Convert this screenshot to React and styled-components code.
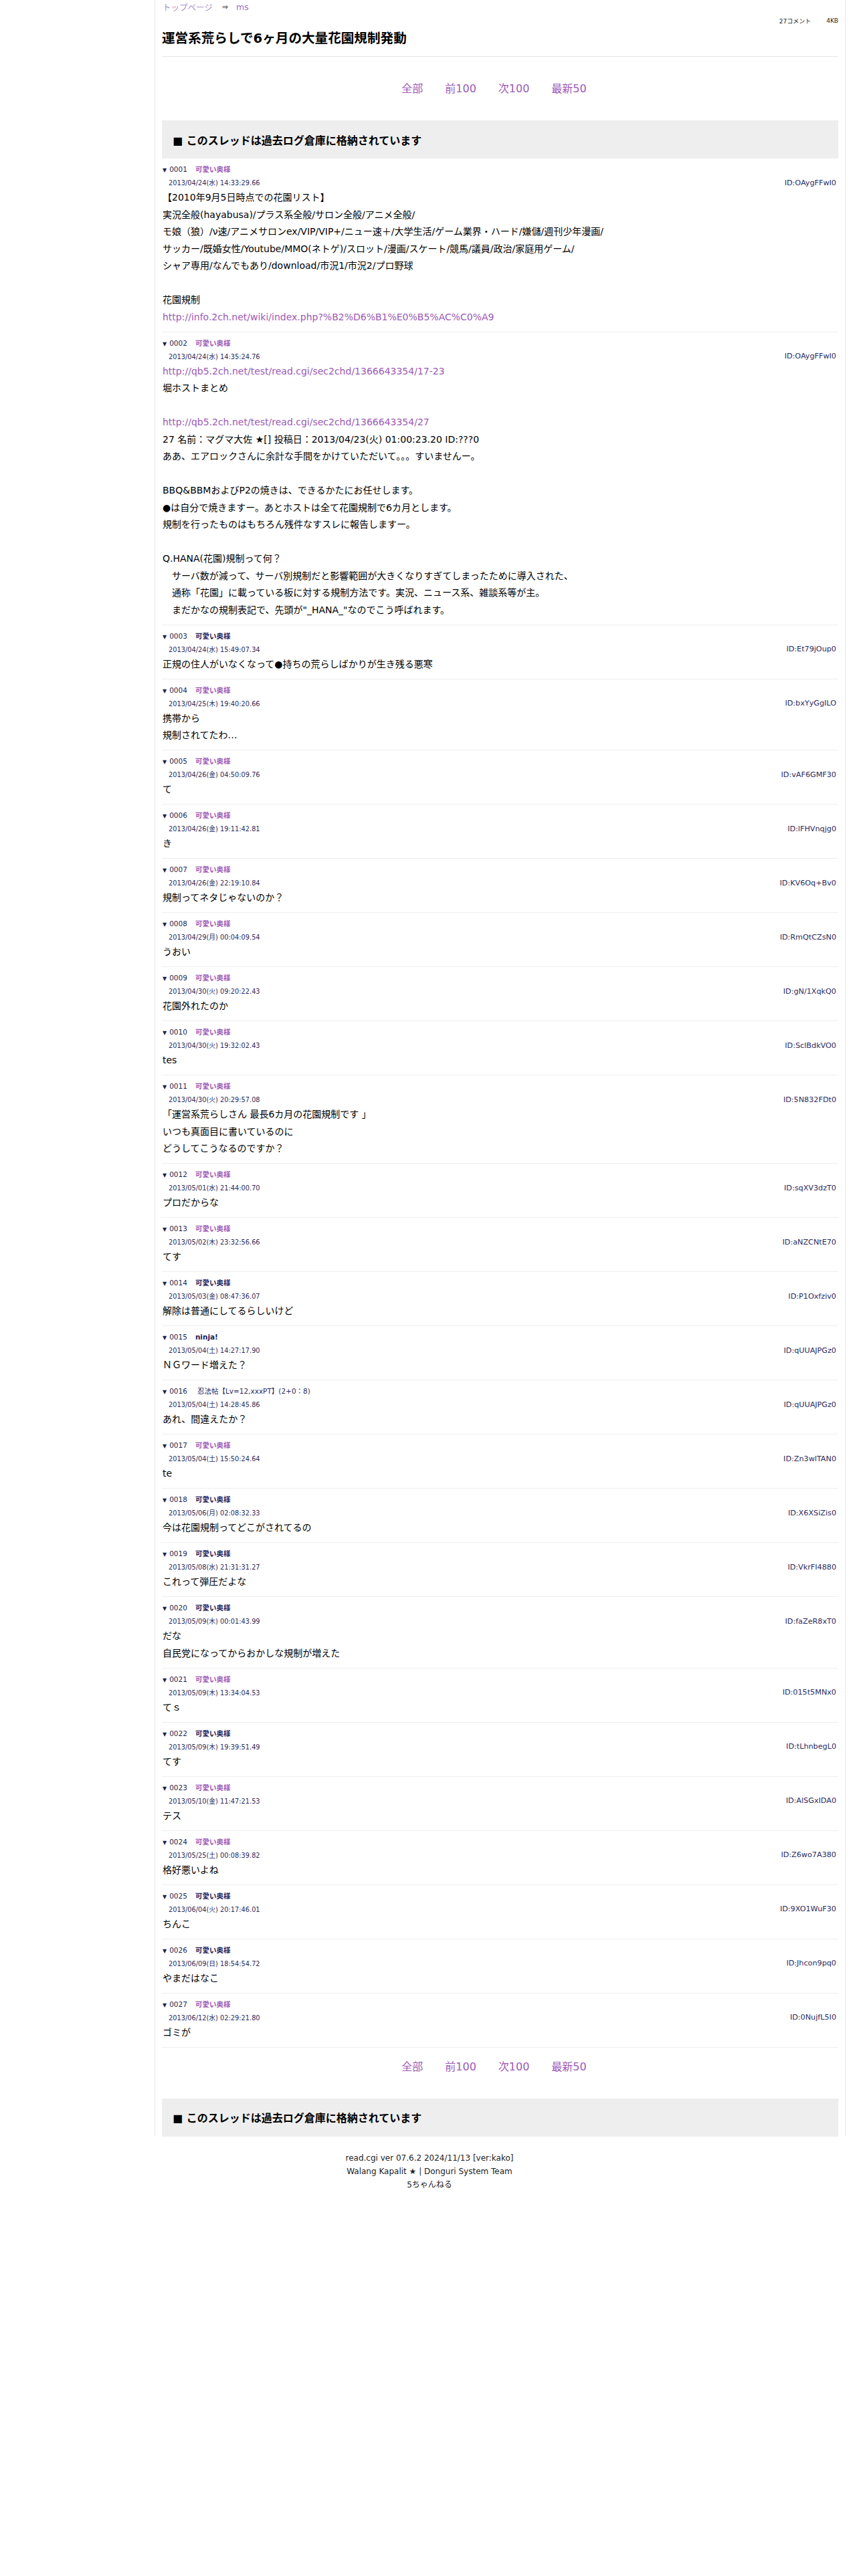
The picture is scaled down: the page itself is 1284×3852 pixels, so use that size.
import React from "react";
import styled, { createGlobalStyle } from "styled-components";

const GlobalStyle = createGlobalStyle`
  body {
    margin: 0;
    background: #fff;
    color: #000;
    font-family: "DejaVu Sans", "Noto Sans CJK JP", sans-serif;
  }
`;

const posts = [
  {
    no: "0001", name: "可愛い奥様", tone: "purple",
    date: "2013/04/24(水) 14:33:29.66", id: "ID:OAygFFwI0",
    body: [
      "【2010年9月5日時点での花園リスト】",
      "実況全般(hayabusa)/プラス系全般/サロン全般/アニメ全般/",
      "モ娘（狼）/ν速/アニメサロンex/VIP/VIP+/ニュー速＋/大学生活/ゲーム業界・ハード/嫌儲/週刊少年漫画/",
      "サッカー/既婚女性/Youtube/MMO(ネトゲ)/スロット/漫画/スケート/競馬/議員/政治/家庭用ゲーム/",
      "シャア専用/なんでもあり/download/市況1/市況2/プロ野球",
      "",
      "花園規制",
      "http://info.2ch.net/wiki/index.php?%B2%D6%B1%E0%B5%AC%C0%A9",
    ],
  },
  {
    no: "0002", name: "可愛い奥様", tone: "purple",
    date: "2013/04/24(水) 14:35:24.76", id: "ID:OAygFFwI0",
    body: [
      "http://qb5.2ch.net/test/read.cgi/sec2chd/1366643354/17-23",
      "堀ホストまとめ",
      "",
      "http://qb5.2ch.net/test/read.cgi/sec2chd/1366643354/27",
      "27 名前：マグマ大佐 ★[] 投稿日：2013/04/23(火) 01:00:23.20 ID:???0",
      "ああ、エアロックさんに余計な手間をかけていただいて。。。すいませんー。",
      "",
      "BBQ&BBMおよびP2の焼きは、できるかたにお任せします。",
      "●は自分で焼きますー。あとホストは全て花園規制で6カ月とします。",
      "規制を行ったものはもちろん残件なすスレに報告しますー。",
      "",
      "Q.HANA(花園)規制って何？",
      "　サーバ数が減って、サーバ別規制だと影響範囲が大きくなりすぎてしまったために導入された、",
      "　通称「花園」に載っている板に対する規制方法です。実況、ニュース系、雑談系等が主。",
      "　まだかなの規制表記で、先頭が\"_HANA_\"なのでこう呼ばれます。",
    ],
  },
  { no: "0003", name: "可愛い奥様", tone: "navy", date: "2013/04/24(水) 15:49:07.34", id: "ID:Et79jOup0", body: ["正規の住人がいなくなって●持ちの荒らしばかりが生き残る悪寒"] },
  { no: "0004", name: "可愛い奥様", tone: "purple", date: "2013/04/25(木) 19:40:20.66", id: "ID:bxYyGgILO", body: ["携帯から", "規制されてたわ…"] },
  { no: "0005", name: "可愛い奥様", tone: "purple", date: "2013/04/26(金) 04:50:09.76", id: "ID:vAF6GMF30", body: ["て"] },
  { no: "0006", name: "可愛い奥様", tone: "purple", date: "2013/04/26(金) 19:11:42.81", id: "ID:lFHVnqjg0", body: ["き"] },
  { no: "0007", name: "可愛い奥様", tone: "purple", date: "2013/04/26(金) 22:19:10.84", id: "ID:KV6Oq+Bv0", body: ["規制ってネタじゃないのか？"] },
  { no: "0008", name: "可愛い奥様", tone: "purple", date: "2013/04/29(月) 00:04:09.54", id: "ID:RmQtCZsN0", body: ["うおい"] },
  { no: "0009", name: "可愛い奥様", tone: "purple", date: "2013/04/30(火) 09:20:22.43", id: "ID:gN/1XqkQ0", body: ["花園外れたのか"] },
  { no: "0010", name: "可愛い奥様", tone: "purple", date: "2013/04/30(火) 19:32:02.43", id: "ID:SclBdkVO0", body: ["tes"] },
  { no: "0011", name: "可愛い奥様", tone: "purple", date: "2013/04/30(火) 20:29:57.08", id: "ID:5N832FDt0", body: ["「運営系荒らしさん 最長6カ月の花園規制です 」", "いつも真面目に書いているのに", "どうしてこうなるのですか？"] },
  { no: "0012", name: "可愛い奥様", tone: "purple", date: "2013/05/01(水) 21:44:00.70", id: "ID:sqXV3dzT0", body: ["プロだからな"] },
  { no: "0013", name: "可愛い奥様", tone: "purple", date: "2013/05/02(木) 23:32:56.66", id: "ID:aNZCNtE70", body: ["てす"] },
  { no: "0014", name: "可愛い奥様", tone: "navy", date: "2013/05/03(金) 08:47:36.07", id: "ID:P1Oxfziv0", body: ["解除は普通にしてるらしいけど"] },
  { no: "0015", name: "ninja!", tone: "navy", date: "2013/05/04(土) 14:27:17.90", id: "ID:qUUAJPGz0", body: ["ＮＧワード増えた？"] },
  { no: "0016", name: "忍法帖【Lv=12,xxxPT】(2+0：8)", tone: "plain", date: "2013/05/04(土) 14:28:45.86", id: "ID:qUUAJPGz0", body: ["あれ、間違えたか？"] },
  { no: "0017", name: "可愛い奥様", tone: "purple", date: "2013/05/04(土) 15:50:24.64", id: "ID:Zn3wlTAN0", body: ["te"] },
  { no: "0018", name: "可愛い奥様", tone: "navy", date: "2013/05/06(月) 02:08:32.33", id: "ID:X6XSiZis0", body: ["今は花園規制ってどこがされてるの"] },
  { no: "0019", name: "可愛い奥様", tone: "navy", date: "2013/05/08(水) 21:31:31.27", id: "ID:VkrFI4880", body: ["これって弾圧だよな"] },
  { no: "0020", name: "可愛い奥様", tone: "navy", date: "2013/05/09(木) 00:01:43.99", id: "ID:faZeR8xT0", body: ["だな", "自民党になってからおかしな規制が増えた"] },
  { no: "0021", name: "可愛い奥様", tone: "purple", date: "2013/05/09(木) 13:34:04.53", id: "ID:015t5MNx0", body: ["てｓ"] },
  { no: "0022", name: "可愛い奥様", tone: "navy", date: "2013/05/09(木) 19:39:51.49", id: "ID:tLhnbegL0", body: ["てす"] },
  { no: "0023", name: "可愛い奥様", tone: "purple", date: "2013/05/10(金) 11:47:21.53", id: "ID:AlSGxIDA0", body: ["テス"] },
  { no: "0024", name: "可愛い奥様", tone: "purple", date: "2013/05/25(土) 00:08:39.82", id: "ID:Z6wo7A380", body: ["格好悪いよね"] },
  { no: "0025", name: "可愛い奥様", tone: "navy", date: "2013/06/04(火) 20:17:46.01", id: "ID:9XO1WuF30", body: ["ちんこ"] },
  { no: "0026", name: "可愛い奥様", tone: "navy", date: "2013/06/09(日) 18:54:54.72", id: "ID:Jhcon9pq0", body: ["やまだはなこ"] },
  { no: "0027", name: "可愛い奥様", tone: "purple", date: "2013/06/12(水) 02:29:21.80", id: "ID:0NujfL5I0", body: ["ゴミが"] },
];

const navLinks = ["全部", "前100", "次100", "最新50"];

export default function App() {
  return (
    <>
      <GlobalStyle />
      <Main>
        <Header>
          <Crumbs>
            <CrumbLink $visited>トップページ</CrumbLink>
            <CrumbArrow>⇒</CrumbArrow>
            <CrumbLink>ms</CrumbLink>
          </Crumbs>
          <ThreadInfo>
            <span>27コメント</span>
            <InfoSize>4KB</InfoSize>
          </ThreadInfo>
          <Title>運営系荒らしで6ヶ月の大量花園規制発動</Title>
        </Header>

        <NavRow $top={36}>
          {navLinks.map((l) => <NavLink key={l}>{l}</NavLink>)}
        </NavRow>
        <Notice>■ このスレッドは過去ログ倉庫に格納されています</Notice>

        {posts.map((p) => (
          <Post key={p.no}>
            <PostHead>
              <Arrow>▼</Arrow>
              <span>{p.no}</span>
              <Name $tone={p.tone}>{p.name}</Name>
            </PostHead>
            <DateRow>
              <span>{p.date}</span>
              <PostId>{p.id}</PostId>
            </DateRow>
            <PostBody>
              {p.body.map((line, i) => (
                <React.Fragment key={i}>
                  {line.startsWith("http") ? <BodyLink>{line}</BodyLink> : line}
                  {i < p.body.length - 1 && <br />}
                </React.Fragment>
              ))}
            </PostBody>
          </Post>
        ))}

        <NavRow $top={17}>
          {navLinks.map((l) => <NavLink key={l}>{l}</NavLink>)}
        </NavRow>
        <Notice>■ このスレッドは過去ログ倉庫に格納されています</Notice>
      </Main>

      <Footer>
        <div>read.cgi ver 07.6.2 2024/11/13 [ver:kako]</div>
        <div>Walang Kapalit ★ | Donguri System Team</div>
        <div>5ちゃんねる</div>
      </Footer>
    </>
  );
}

const Main = styled.main`
  box-sizing: border-box;
  width: 1033px;
  margin-left: 231px;
  padding: 0 10px;
  border-left: 1px solid #e8e8e8;
  border-right: 1px solid #e8e8e8;
`;

const Header = styled.header`
  padding-bottom: 12px;
  border-bottom: 1px solid #e6e6e6;
`;

const Crumbs = styled.div`
  display: flex;
  align-items: center;
  height: 20px;
  font-size: 12.5px;
  padding-left: 1px;
`;

const CrumbLink = styled.a`
  color: ${({ $visited }) => ($visited ? "#a88fc6" : "#9a6cc2")};
  text-decoration: none;
`;

const CrumbArrow = styled.span`
  margin: 0 12px 0 14px;
  font-size: 11px;
  color: #444;
`;

const ThreadInfo = styled.div`
  display: flex;
  justify-content: flex-end;
  align-items: center;
  height: 22px;
  font-size: 9px;
  color: #222;
`;

const InfoSize = styled.span`
  margin-left: 23px;
`;

const Title = styled.h1`
  margin: 2px 0 0;
  font-size: 19.6px;
  line-height: 28px;
  font-weight: bold;
  color: #000;
`;

const NavRow = styled.nav`
  display: flex;
  justify-content: center;
  gap: 33px;
  padding: ${({ $top }) => $top}px 18px 35px 0;
  font-size: 16px;
  line-height: 24px;
`;

const NavLink = styled.a`
  color: #9b59b6;
  text-decoration: none;
`;

const Notice = styled.div`
  display: flex;
  align-items: center;
  height: 57px;
  padding-left: 16px;
  background: #eeeeee;
  font-size: 16px;
  font-weight: bold;
  color: #000;
`;

const Post = styled.article`
  padding: 6px 0 8.5px;
  border-bottom: 1px solid #eeeeee;
`;

const PostHead = styled.div`
  display: flex;
  align-items: baseline;
  height: 20px;
  line-height: 20px;
  font-size: 10.5px;
  color: #1f1f50;
  padding-left: 1px;
`;

const Arrow = styled.span`
  font-size: 8px;
  margin-right: 4px;
`;

const nameColors = {
  purple: "#9b59b6",
  navy: "#1c1c5c",
  plain: "#2a2a5a",
};

const Name = styled.span`
  margin-left: ${({ $tone }) => ($tone === "plain" ? "15px" : "12px")};
  font-weight: ${({ $tone }) => ($tone === "plain" ? "normal" : "bold")};
  color: ${({ $tone }) => nameColors[$tone]};
`;

const DateRow = styled.div`
  display: flex;
  justify-content: space-between;
  align-items: center;
  height: 20px;
  padding: 0 3px 0 10px;
  font-size: 9.8px;
  color: #2a2a5a;
`;

const PostId = styled.span`
  font-size: 11.2px;
  color: #2b2b5e;
`;

const PostBody = styled.div`
  padding-left: 1px;
  font-size: 14px;
  line-height: 25.5px;
  color: #000;
`;

const BodyLink = styled.a`
  color: #9b59b6;
  text-decoration: none;
`;

const Footer = styled.footer`
  margin-top: 22px;
  text-align: center;
  font-size: 12px;
  line-height: 20px;
  color: #222;
`;
